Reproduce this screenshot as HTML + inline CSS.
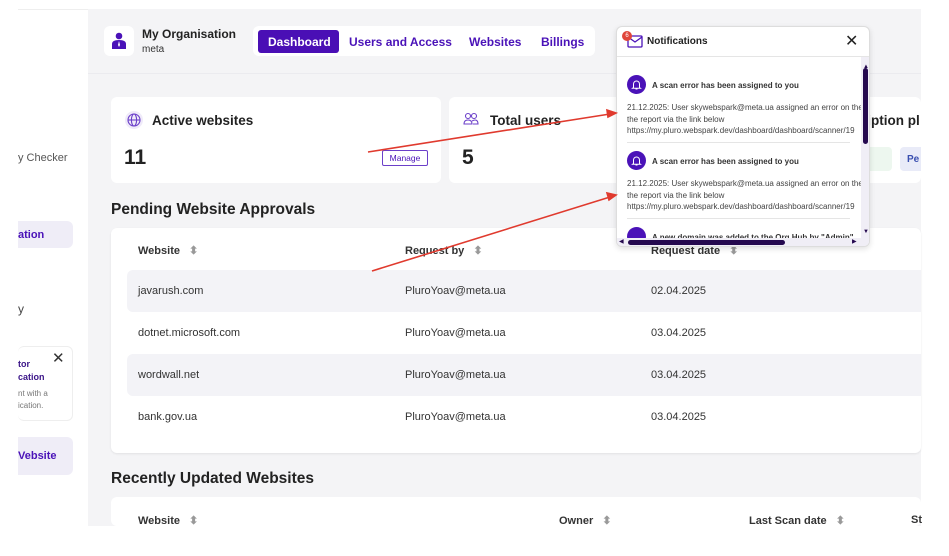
<!DOCTYPE html>
<html><head><meta charset="utf-8"><style>
*{box-sizing:border-box;margin:0;padding:0}
body{width:949px;height:556px;background:#fff;font-family:"Liberation Sans",sans-serif;position:relative;overflow:hidden;color:#222}
.abs{position:absolute}
.main{left:88px;top:9px;width:833px;height:517px;background:#f4f4f6}
.card{background:#fff;border-radius:6px}
.nav a{color:#4a12b8;font-weight:bold;font-size:12px;text-decoration:none;position:absolute;top:9px}
.row{position:absolute;left:127px;width:794px;height:42px;font-size:11px;color:#333}
.row span{position:absolute;top:15px}
.th{font-size:11px;font-weight:bold;color:#333}
.notif{font-size:8px;color:#333}
</style></head><body>
<div class="abs" style="left:18px;top:9px;width:70px;height:1px;background:#eee"></div>
<div class="abs main"></div>
<div class="abs" style="left:88px;top:73px;width:833px;height:1px;background:#ebebef"></div>
<!-- sidebar -->
<div class="abs" style="left:18px;top:152px;font-size:11px;color:#555">y Checker</div>
<div class="abs card" style="left:18px;top:221px;width:55px;height:27px;background:#efedf7;border-radius:0 6px 6px 0"></div>
<div class="abs" style="left:18px;top:229px;font-size:11px;color:#4a12b8;font-weight:bold">ation</div>
<div class="abs" style="left:18px;top:302px;font-size:12px;color:#444">y</div>
<div class="abs card" style="left:18px;top:346px;width:55px;height:75px;border:1px solid #eee;border-left:none"></div>
<div class="abs" style="left:18px;top:358px;font-size:9px;color:#3a1488;font-weight:bold;line-height:13px">tor<br>cation</div>
<div class="abs" style="left:18px;top:388px;font-size:8px;color:#777;line-height:12px">nt with a<br>ication.</div>
<div class="abs" style="left:52px;top:349px;font-size:15px;color:#333">✕</div>
<div class="abs card" style="left:18px;top:437px;width:55px;height:38px;background:#efedf7;border-radius:0 6px 6px 0"></div>
<div class="abs" style="left:18px;top:450px;font-size:11px;color:#4a12b8;font-weight:bold">Vebsite</div>
<!-- org header -->
<div class="abs card" style="left:104px;top:26px;width:30px;height:30px"></div>
<svg class="abs" style="left:111px;top:32px" width="16" height="18" viewBox="0 0 16 18"><circle cx="8" cy="4" r="3.3" fill="#4a12b8"/><path d="M1 17 V12 Q1 8 8 8 Q15 8 15 12 V17Z" fill="#4a12b8"/><path d="M8 9 L7 13 L8 15 L9 13Z" fill="#fff"/></svg>
<div class="abs" style="left:142px;top:27px;font-size:12px;font-weight:bold;color:#222">My Organisation</div>
<div class="abs" style="left:142px;top:44px;font-size:10px;color:#333">meta</div>
<div class="abs card nav" style="left:253px;top:26px;width:342px;height:30px">
<div class="abs" style="left:5px;top:4px;width:81px;height:23px;background:#4a0fb5;border-radius:3px"></div>
<a style="left:15px;color:#fff">Dashboard</a><a style="left:96px">Users and Access</a><a style="left:216px">Websites</a><a style="left:288px">Billings</a></div>
<!-- stat cards -->
<div class="abs card" style="left:111px;top:97px;width:330px;height:86px"></div>
<div class="abs" style="left:125px;top:111px;width:18px;height:18px;border-radius:50%;background:#efeaf9"></div>
<svg class="abs" style="left:127px;top:113px" width="14" height="14" viewBox="0 0 14 14" fill="none" stroke="#6b3fc9" stroke-width="1.1"><circle cx="7" cy="7" r="6"/><ellipse cx="7" cy="7" rx="2.6" ry="6"/><path d="M1 7h12"/></svg>
<div class="abs" style="left:152px;top:113px;font-size:13.5px;font-weight:bold">Active websites</div>
<div class="abs" style="left:124px;top:146px;font-size:21px;font-weight:bold">11</div>
<div class="abs" style="left:382px;top:150px;width:46px;height:16px;border:1px solid #6b3fc9;border-radius:2px;font-size:8.5px;color:#4a12b8;text-align:center;line-height:14px">Manage</div>
<div class="abs card" style="left:449px;top:97px;width:172px;height:86px"></div>
<svg class="abs" style="left:463px;top:112px" width="16" height="14" viewBox="0 0 16 14" fill="none" stroke="#6b3fc9" stroke-width="1.1"><circle cx="5" cy="4" r="2.5"/><circle cx="11" cy="4" r="2.5"/><path d="M1 12q0-4 4-4t4 4zM9 9q2-1 3-1 3 0 3 4h-5"/></svg>
<div class="abs" style="left:490px;top:113px;font-size:13.5px;font-weight:bold">Total users</div>
<div class="abs" style="left:462px;top:146px;font-size:21px;font-weight:bold">5</div>
<div class="abs card" style="left:860px;top:97px;width:61px;height:86px"></div>
<div class="abs" style="left:862px;top:113px;font-size:13.5px;font-weight:bold">ription pl</div>
<div class="abs" style="left:862px;top:147px;width:30px;height:24px;background:#edf7ef;border-radius:4px"></div>
<div class="abs" style="left:900px;top:147px;width:21px;height:24px;background:#e9ebf8;border-radius:4px 0 0 4px;font-size:10px;font-weight:bold;color:#3a4fb0;padding:7px 0 0 7px">Pe</div>
<!-- pending -->
<div class="abs" style="left:111px;top:201px;font-size:15.5px;font-weight:bold">Pending Website Approvals</div>
<div class="abs card" style="left:111px;top:228px;width:810px;height:225px;box-shadow:0 1px 2px rgba(0,0,0,.08)"></div>
<div class="abs th" style="left:138px;top:244px">Website <span style="color:#999;margin-left:6px">⬍</span></div>
<div class="abs th" style="left:405px;top:244px">Request by <span style="color:#999;margin-left:6px">⬍</span></div>
<div class="abs th" style="left:651px;top:244px">Request date <span style="color:#999;margin-left:6px">⬍</span></div>
<div class="row" style="top:270px;background:#f3f3f7;border-radius:6px 0 0 6px"><span style="left:11px">javarush.com</span><span style="left:278px">PluroYoav@meta.ua</span><span style="left:524px">02.04.2025</span></div>
<div class="row" style="top:312px"><span style="left:11px">dotnet.microsoft.com</span><span style="left:278px">PluroYoav@meta.ua</span><span style="left:524px">03.04.2025</span></div>
<div class="row" style="top:354px;background:#f3f3f7;border-radius:6px 0 0 6px"><span style="left:11px">wordwall.net</span><span style="left:278px">PluroYoav@meta.ua</span><span style="left:524px">03.04.2025</span></div>
<div class="row" style="top:396px"><span style="left:11px">bank.gov.ua</span><span style="left:278px">PluroYoav@meta.ua</span><span style="left:524px">03.04.2025</span></div>
<!-- recent -->
<div class="abs" style="left:111px;top:470px;font-size:15.5px;font-weight:bold">Recently Updated Websites</div>
<div class="abs card" style="left:111px;top:497px;width:810px;height:29px"></div>
<div class="abs th" style="left:138px;top:514px">Website <span style="color:#999;margin-left:6px">⬍</span></div>
<div class="abs th" style="left:559px;top:514px">Owner <span style="color:#999;margin-left:6px">⬍</span></div>
<div class="abs th" style="left:749px;top:514px">Last Scan date <span style="color:#999;margin-left:6px">⬍</span></div>
<div class="abs th" style="left:911px;top:514px">St</div>
<div class="abs" style="left:0;top:526px;width:949px;height:30px;background:#fff"></div>
<!-- notifications -->
<div class="abs card" style="left:616px;top:26px;width:254px;height:221px;border:1px solid #ddd;box-shadow:0 2px 6px rgba(0,0,0,.12);overflow:hidden">
<div class="abs" style="left:0;top:29px;width:254px;height:1px;background:#e5e5e5"></div>
<svg class="abs" style="left:10px;top:8px" width="16" height="13" viewBox="0 0 16 13" fill="none" stroke="#4a12b8" stroke-width="1.3"><rect x="1" y="1" width="14" height="11" rx="1"/><path d="M1 2l7 5 7-5"/></svg>
<div class="abs" style="left:5px;top:4px;width:10px;height:10px;border-radius:50%;background:#e0453a;color:#fff;font-size:6px;text-align:center;line-height:10px">6</div>
<div class="abs" style="left:30px;top:9px;font-size:10px;font-weight:bold">Notifications</div>
<div class="abs" style="left:228px;top:4px;font-size:16px;color:#222">✕</div>
<svg class="abs" style="left:10px;top:48px" width="19" height="19" viewBox="0 0 19 19"><circle cx="9.5" cy="9.5" r="9.5" fill="#4a12b8"/><path d="M6.5 12.5V9a3 3 0 0 1 6 0v3.5l1 0.8h-8z M8.5 14h2" fill="none" stroke="#fff" stroke-width="1"/></svg>
<div class="abs notif" style="left:35px;top:54px;font-weight:bold">A scan error has been assigned to you</div>
<div class="abs notif" style="left:10px;top:75px;line-height:11.5px;white-space:nowrap;color:#444">21.12.2025: User skywebspark@meta.ua assigned an error on the<br>the report via the link below<br>https://my.pluro.webspark.dev/dashboard/dashboard/scanner/19</div>
<div class="abs" style="left:10px;top:115px;width:223px;height:1px;background:#e5e5e5"></div>
<svg class="abs" style="left:10px;top:124px" width="19" height="19" viewBox="0 0 19 19"><circle cx="9.5" cy="9.5" r="9.5" fill="#4a12b8"/><path d="M6.5 12.5V9a3 3 0 0 1 6 0v3.5l1 0.8h-8z M8.5 14h2" fill="none" stroke="#fff" stroke-width="1"/></svg>
<div class="abs notif" style="left:35px;top:130px;font-weight:bold">A scan error has been assigned to you</div>
<div class="abs notif" style="left:10px;top:151px;line-height:11.5px;white-space:nowrap;color:#444">21.12.2025: User skywebspark@meta.ua assigned an error on the<br>the report via the link below<br>https://my.pluro.webspark.dev/dashboard/dashboard/scanner/19</div>
<div class="abs" style="left:10px;top:191px;width:223px;height:1px;background:#e5e5e5"></div>
<div class="abs" style="left:10px;top:200px;width:19px;height:19px;border-radius:50%;background:#4a12b8"></div>
<div class="abs notif" style="left:35px;top:206px;font-weight:bold">A new domain was added to the Org Hub by "Admin"</div>
<div class="abs" style="left:244px;top:30px;width:10px;height:191px;background:#f0eef6"></div>
<div class="abs" style="left:246px;top:37px;font-size:6px;color:#25094f">▲</div>
<div class="abs" style="left:246px;top:202px;font-size:6px;color:#25094f">▼</div>
<div class="abs" style="left:246px;top:41px;width:5px;height:76px;background:#25094f;border-radius:3px"></div>
<div class="abs" style="left:0;top:211px;width:254px;height:10px;background:#f0eef6"></div>
<div class="abs" style="left:2px;top:211px;font-size:6px;color:#25094f">◀</div>
<div class="abs" style="left:235px;top:211px;font-size:6px;color:#25094f">▶</div>
<div class="abs" style="left:11px;top:213px;width:157px;height:5px;background:#25094f;border-radius:3px"></div>
</div>
<!-- arrows -->
<svg class="abs" style="left:0;top:0" width="949" height="556"><g stroke="#e03a2e" stroke-width="1.6" fill="#e03a2e"><line x1="368" y1="152" x2="610" y2="114"/><path d="M616 113l-9-3 1 7z"/><line x1="372" y1="271" x2="610" y2="197"/><path d="M616 195l-9-2 2 7z"/></g></svg>
</body></html>
